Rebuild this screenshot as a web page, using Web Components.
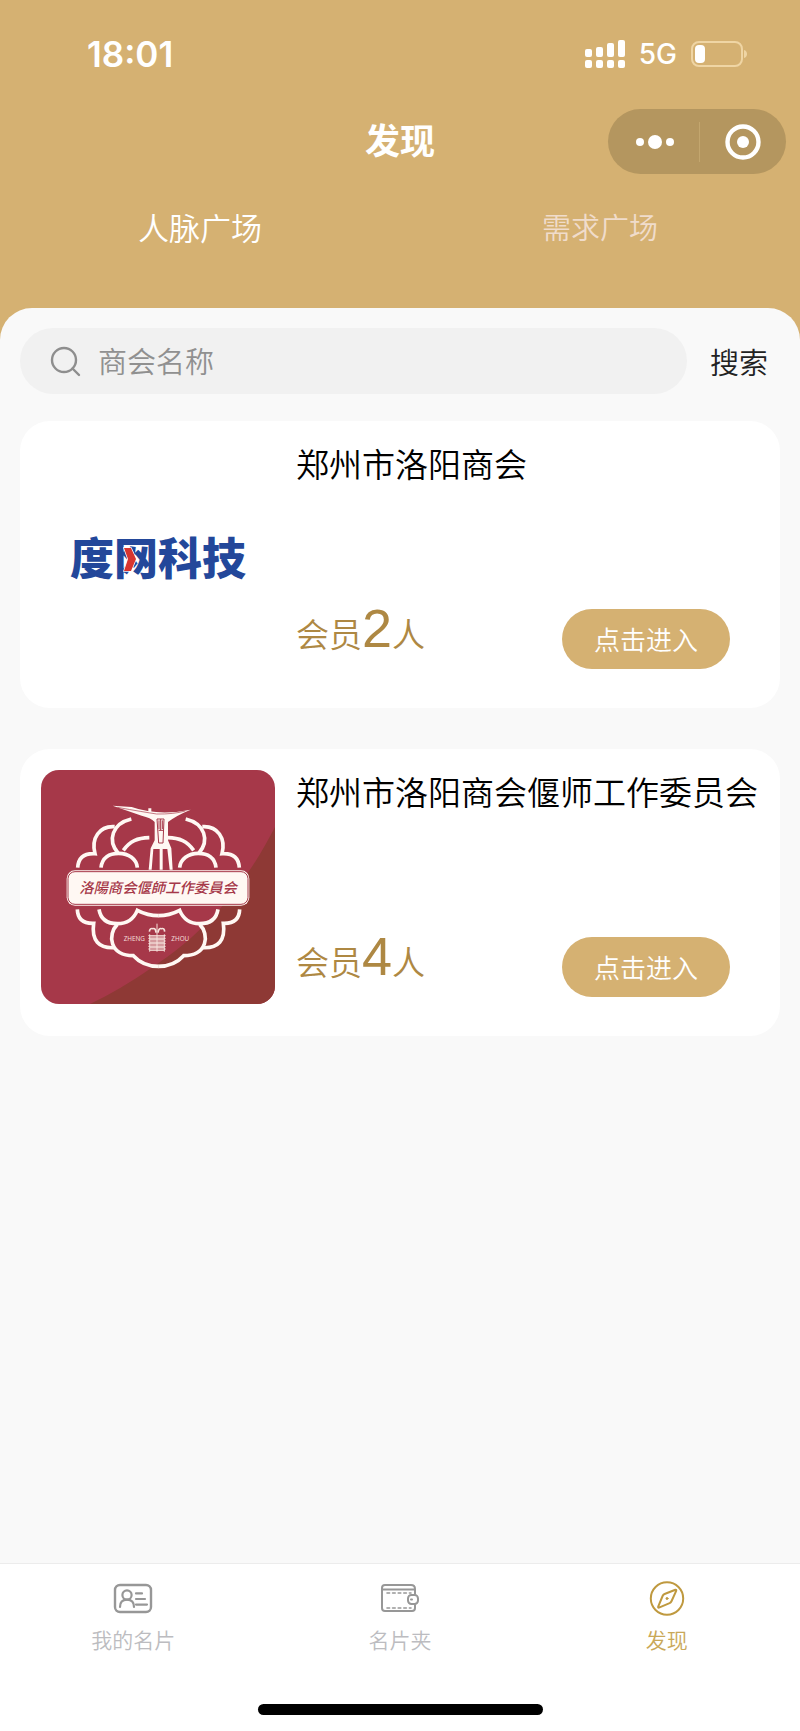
<!DOCTYPE html>
<html lang="zh-CN">
<head>
<meta charset="utf-8">
<meta name="viewport" content="width=device-width, initial-scale=1">
<title>发现</title>
<style>
  body {
    margin: 0;
    font-family: "Liberation Sans", "Noto Sans CJK SC", sans-serif;
    font-weight: 350;
    --dorado: #d5b172;
    --fondo: #f9f9f9;
  }
</style>
</head>
<body>

<app-pantalla>
  <barra-estado slot="cabecera" hora="18:01" red="5G"></barra-estado>
  <barra-titulo slot="cabecera">发现</barra-titulo>
  <menu-plazas slot="cabecera"></menu-plazas>

  <buscador-camara texto="商会名称"></buscador-camara>
  <tarjeta-camara miembros="2">
    <logo-duwang slot="logo"></logo-duwang>
    郑州市洛阳商会
  </tarjeta-camara>
  <tarjeta-camara miembros="4">
    <logo-yanshi slot="logo"></logo-yanshi>
    郑州市洛阳商会偃师工作委员会
  </tarjeta-camara>

  <barra-inferior slot="pie">
    <item-menu icono="tarjeta">我的名片</item-menu>
    <item-menu icono="cartera">名片夹</item-menu>
    <item-menu icono="brujula" activo>发现</item-menu>
  </barra-inferior>
</app-pantalla>

<script>
class AppPantalla extends HTMLElement {
  constructor() {
    super();
    this.attachShadow({ mode: 'open' });
    this.shadowRoot.innerHTML = `
      <style>
        :host {
          display: flex;
          flex-direction: column;
          min-height: 100vh;
          background: var(--dorado);
        }
        main {
          flex: 1;
          display: flex;
          flex-direction: column;
          background: var(--fondo);
          border-radius: 32px 32px 0 0;
          padding: 20px 20px 40px;
        }
      </style>
      <header><slot name="cabecera"></slot></header>
      <main><slot></slot></main>
      <slot name="pie"></slot>
    `;
  }
}

class BarraEstado extends HTMLElement {
  constructor() {
    super();
    this.attachShadow({ mode: 'open' });
    this.shadowRoot.innerHTML = `
      <style>
        :host {
          display: flex;
          align-items: center;
          justify-content: space-between;
          height: 107px;
          padding: 0 52px 0 87px;
          color: #fff;
          font-family: Inter, sans-serif;
        }
        .hora { font-size: 35px; font-weight: 600; }
        .derecha { display: flex; align-items: center; gap: 14px; }
        .red { font-size: 28px; font-weight: 500; }
        svg { display: block; }
      </style>
      <span class="hora">${this.getAttribute('hora')}</span>
      <div class="derecha">
        <svg width="40" height="28" viewBox="0 0 40 28" fill="#fff">
          <rect x="0" y="9" width="7" height="8" rx="2"/>
          <rect x="11" y="7" width="7" height="10" rx="2"/>
          <rect x="22" y="3" width="7" height="14" rx="2"/>
          <rect x="33" y="0" width="7" height="17" rx="2"/>
          <rect x="0" y="20" width="7" height="8" rx="2"/>
          <rect x="11" y="20" width="7" height="8" rx="2"/>
          <rect x="22" y="20" width="7" height="8" rx="2"/>
          <rect x="33" y="20" width="7" height="8" rx="2"/>
        </svg>
        <span class="red">${this.getAttribute('red')}</span>
        <svg width="57" height="26" viewBox="0 0 57 26">
          <rect x="1" y="1" width="50" height="24" rx="7" fill="none" stroke="#efd5a4" stroke-width="2"/>
          <path d="M53 9 C57 10 57 16 53 17 Z" fill="#efd5a4"/>
          <rect x="4" y="4" width="10" height="18" rx="4" fill="#fff"/>
        </svg>
      </div>
    `;
  }
}

class BarraTitulo extends HTMLElement {
  constructor() {
    super();
    this.attachShadow({ mode: 'open' });
    this.shadowRoot.innerHTML = `
      <style>
        :host {
          display: grid;
          grid-template-columns: 1fr auto 1fr;
          align-items: center;
          height: 69px;
          padding: 0 14px;
          color: #fff;
        }
        h1 {
          grid-column: 2;
          margin: 0;
          font-size: 35px;
          line-height: 50px;
          font-weight: 700;
        }
        .capsula {
          justify-self: end;
          display: flex;
          align-items: center;
          width: 178px;
          height: 65px;
          border-radius: 33px;
          background: #b4965f;
        }
        .capsula button {
          flex: 1;
          display: flex;
          align-items: center;
          justify-content: center;
          height: 100%;
          padding: 0;
          border: 0;
          background: none;
        }
        .capsula button:first-child { padding-left: 4px; }
        .linea { width: 1px; height: 40px; background: #c3a66e; }
      </style>
      <h1><slot></slot></h1>
      <div class="capsula">
        <button type="button" aria-label="更多">
          <svg width="40" height="14" viewBox="0 0 40 14" fill="#fff">
            <circle cx="5" cy="7" r="4"/>
            <circle cx="20" cy="7" r="7"/>
            <circle cx="35" cy="7" r="4"/>
          </svg>
        </button>
        <span class="linea"></span>
        <button type="button" aria-label="关闭">
          <svg width="36" height="36" viewBox="0 0 36 36">
            <circle cx="18" cy="18" r="15.5" fill="none" stroke="#fff" stroke-width="4.4"/>
            <circle cx="18" cy="18" r="6" fill="#fff"/>
          </svg>
        </button>
      </div>
    `;
  }
}

class MenuPlazas extends HTMLElement {
  constructor() {
    super();
    this.attachShadow({ mode: 'open' });
    this.shadowRoot.innerHTML = `
      <style>
        :host { display: block; padding-bottom: 32px; }
        div { display: flex; }
        button {
          flex: 1;
          height: 100px;
          padding: 0;
          border: 0;
          background: none;
          color: #f0dccb;
          font: inherit;
          font-size: 29px;
        }
        button[aria-selected="true"] { color: #fff; font-size: 31px; }
      </style>
      <div role="tablist">
        <button type="button" role="tab" aria-selected="true">人脉广场</button>
        <button type="button" role="tab" aria-selected="false">需求广场</button>
      </div>
    `;
  }
}

class BuscadorCamara extends HTMLElement {
  constructor() {
    super();
    this.attachShadow({ mode: 'open' });
    const texto = this.getAttribute('texto') || '';
    this.shadowRoot.innerHTML = `
      <style>
        :host { display: block; margin-bottom: 27px; }
        form { display: flex; align-items: center; gap: 23px; padding-right: 12px; }
        label {
          flex: 1;
          display: flex;
          align-items: center;
          gap: 17px;
          height: 66px;
          box-sizing: border-box;
          padding: 0 30px;
          border-radius: 33px;
          background: #f1f1f1;
        }
        input {
          flex: 1;
          min-width: 0;
          height: 44px;
          padding: 4px 0 0;
          border: 0;
          outline: 0;
          background: none;
          color: #333;
          font: inherit;
          font-size: 29px;
        }
        input::placeholder { color: #909090; opacity: 1; }
        button {
          padding: 0;
          border: 0;
          background: none;
          color: #222;
          font: inherit;
          font-size: 29px;
        }
      </style>
      <form onsubmit="return false">
        <label for="nombre">
          <svg width="31" height="31" viewBox="0 0 31 31" fill="none" stroke="#8e8e8e" stroke-width="2.4" stroke-linecap="round">
            <circle cx="14" cy="14" r="12"/>
            <path d="M22.5 22.5 L29 29"/>
          </svg>
          <input id="nombre" type="text" placeholder="${texto}" aria-label="${texto}">
        </label>
        <button type="submit">搜索</button>
      </form>
    `;
  }
}

class TarjetaCamara extends HTMLElement {
  constructor() {
    super();
    this.attachShadow({ mode: 'open' });
    this.shadowRoot.innerHTML = `
      <style>
        :host {
          display: flex;
          gap: 21px;
          margin-bottom: 41px;
          padding: 21px 21px 32px;
          border-radius: 30px;
          background: #fff;
        }
        .info {
          flex: 1;
          min-width: 0;
          display: flex;
          flex-direction: column;
          justify-content: space-between;
        }
        h2 {
          margin: 0;
          color: #000;
          font-size: 33px;
          line-height: 48px;
          font-weight: 350;
        }
        .fila {
          display: flex;
          align-items: center;
          justify-content: space-between;
          height: 74px;
          padding-right: 29px;
        }
        .miembros {
          align-self: flex-start;
          color: #ae8843;
          font-size: 33px;
          line-height: 52px;
        }
        .miembros b { font-size: 54px; font-weight: 400; }
        button {
          width: 168px;
          height: 60px;
          padding: 0 0 2px;
          border: 0;
          border-radius: 30px;
          background: var(--dorado);
          color: #fff;
          font: inherit;
          font-size: 26px;
        }
      </style>
      <slot name="logo"></slot>
      <div class="info">
        <h2><slot></slot></h2>
        <div class="fila">
          <span class="miembros">会员<b>${this.getAttribute('miembros')}</b>人</span>
          <button type="button">点击进入</button>
        </div>
      </div>
    `;
  }
}

class LogoDuwang extends HTMLElement {
  constructor() {
    super();
    this.attachShadow({ mode: 'open' });
    this.shadowRoot.innerHTML = `
      <style>
        :host { display: block; width: 234px; height: 234px; }
        svg { display: block; }
      </style>
      <svg width="234" height="234" viewBox="0 0 234 234" role="img">
        <text x="117" y="133" text-anchor="middle" font-family="Noto Sans CJK SC, sans-serif" font-size="44" font-weight="900" fill="#23479a">度网科技</text>
        <path d="M83 106 h7 l5 11 -5 12 h-7 l4 -12 Z" fill="#d8352f" stroke="#fff" stroke-width="1.5" paint-order="stroke"/>
      </svg>
    `;
  }
}

class LogoYanshi extends HTMLElement {
  constructor() {
    super();
    this.attachShadow({ mode: 'open' });
    // media nube: la otra mitad es la misma, reflejada
    const nube = `
      <path d="M143 320 C145 290 163 276 195 278 C183 232 208 194 254 197"/>
      <path d="M304 174 C246 188 232 238 264 276"/>
      <path d="M213 320 C216 290 238 277 266 277 C296 277 320 294 322 320"/>
      <path d="M280 268 C300 240 322 231 358 230"/>
      <path d="M142 445 C143 474 160 488 191 487 C184 538 206 563 254 560"/>
      <path d="M207 445 C212 475 232 488 262 488 C292 488 312 472 322 448 Q353 464 386 464"/>
      <path d="M262 490 C232 520 238 584 310 584 C330 606 358 616 386 616"/>`;
    let pisos = '';
    for (let y = 524; y < 572; y += 8) {
      pisos += `<path d="M355 ${y} H407 M360 ${y + 4} H402"/>`;
    }
    this.shadowRoot.innerHTML = `
      <style>
        :host { display: block; width: 234px; height: 234px; border-radius: 18px; overflow: hidden; }
        svg { display: block; }
      </style>
      <svg width="234" height="234" viewBox="33 27 702 702" role="img">
        <rect x="33" y="27" width="702" height="702" fill="#a63849"/>
        <path d="M735 198 C650 365 530 515 365 620 C300 665 240 700 180 729 H735 Z" fill="#8e3935"/>
        <g fill="none" stroke="#fff8f3" stroke-width="11">
          <g>${nube}</g>
          <g transform="translate(771 0) scale(-1 1)">${nube}</g>
        </g>
        <path d="M248 134 L305 138 Q385 166 482 146 Q438 164 414 183 V238 L424 262 L428 326 H419 L412 264 H398 V326 H389 V264 H370 L365 326 H356 L362 262 L374 238 V183 Q362 170 335 164 Z" fill="#fff8f3"/>
        <path d="M355 153 V142 H364 V156" fill="#fff8f3"/>
        <path d="M262 139 Q340 153 380 159 Q430 160 466 150" fill="none" stroke="#a63849" stroke-width="2"/>
        <path d="M381 174 H402 L399 246 H386 Z M387 178 V204 M392 174 V208 M397 178 V204 M386 208 H400" fill="none" stroke="#a63849" stroke-width="3"/>
        <rect x="110" y="328" width="548" height="106" rx="25" fill="#fff8f3"/>
        <rect x="114" y="332" width="540" height="98" rx="21" fill="none" stroke="#a63849" stroke-width="3"/>
        <text x="384" y="397" text-anchor="middle" font-family="Noto Sans CJK TC, sans-serif" font-size="43" font-style="italic" font-weight="500" fill="#a63849">洛陽商会偃師工作委員会</text>
        <g fill="#f3dcd8" font-family="Noto Sans, sans-serif" font-size="19" font-weight="400">
          <text x="281" y="541">ZHENG</text>
          <text x="424" y="541">ZHOU</text>
        </g>
        <g fill="none" stroke="#f6e2dc" stroke-width="3">
          <path d="M381 488 V520"/>
          <path d="M358 512 Q360 500 369 503 Q377 500 378 515 M384 515 Q386 500 394 503 Q403 500 404 512" stroke-width="5"/>
          ${pisos}
          <path d="M359 520 V572 M381 520 V572 M403 520 V572"/>
        </g>
      </svg>
    `;
  }
}

const ICONOS = {
  tarjeta: `
    <rect x="2" y="5" width="36" height="27" rx="5" stroke-width="2.4"/>
    <circle cx="14" cy="15" r="4.6" stroke-width="2.2"/>
    <path d="M7 27 C7 22 10 19.6 14 19.6 C18 19.6 21 22 21 27 M23 13.4 H29 M23 19 H32 M23 24.6 H34" stroke-width="2.2"/>`,
  cartera: `
    <path d="M35 14 V9 Q35 5 31 5 H5 Q2 5 2 8 V28 Q2 31 5 31 H32 Q35 31 35 28 V25 M2 9.4 H35"/>
    <path d="M7 13 H31 M7 28 H31" stroke-dasharray="2.6 3" stroke-width="1.6"/>
    <rect x="28" y="15" width="10" height="9" rx="3.4"/>
    <path d="M31 19.5 H32"/>`,
  brujula: `
    <circle cx="20" cy="18.5" r="16.2"/>
    <path d="M28.4 9.8 Q29.6 9.6 29.2 10.8 L24.6 21 Q24 22.4 22.6 23.2 L12 27.6 Q10.8 27.8 11.2 26.6 L15.6 16 Q16.2 14.6 17.6 14 Z"/>
    <circle cx="20" cy="18.5" r="1" fill="currentColor" stroke-width="1"/>`
};

class BarraInferior extends HTMLElement {
  constructor() {
    super();
    this.attachShadow({ mode: 'open' });
    this.shadowRoot.innerHTML = `
      <style>
        :host {
          display: block;
          padding: 16px 0;
          border-top: 1px solid #ececec;
          background: #fff;
        }
        nav { display: flex; height: 124px; }
        .inicio {
          width: 285px;
          height: 11px;
          margin: 0 auto;
          border-radius: 6px;
          background: #000;
        }
      </style>
      <nav><slot></slot></nav>
      <div class="inicio"></div>
    `;
  }
}

class ItemMenu extends HTMLElement {
  constructor() {
    super();
    this.attachShadow({ mode: 'open' });
    const activo = this.hasAttribute('activo');
    this.shadowRoot.innerHTML = `
      <style>
        :host { display: block; flex: 1; }
        a {
          display: flex;
          flex-direction: column;
          align-items: center;
          gap: 9px;
          color: ${activo ? '#c9a858' : '#bcbcc0'};
          font-size: 21px;
          line-height: 30px;
          text-decoration: none;
        }
        svg { display: block; color: ${activo ? '#bf993f' : '#979797'}; }
      </style>
      <a href="#"${activo ? ' aria-current="page"' : ''}>
        <svg width="40" height="37" viewBox="0 0 40 37" fill="none" stroke="currentColor" stroke-width="2" stroke-linecap="round" stroke-linejoin="round">${ICONOS[this.getAttribute('icono')]}</svg>
        <slot></slot>
      </a>
    `;
  }
}

customElements.define('app-pantalla', AppPantalla);
customElements.define('barra-estado', BarraEstado);
customElements.define('barra-titulo', BarraTitulo);
customElements.define('menu-plazas', MenuPlazas);
customElements.define('buscador-camara', BuscadorCamara);
customElements.define('tarjeta-camara', TarjetaCamara);
customElements.define('logo-duwang', LogoDuwang);
customElements.define('logo-yanshi', LogoYanshi);
customElements.define('barra-inferior', BarraInferior);
customElements.define('item-menu', ItemMenu);
</script>
</body>
</html>
